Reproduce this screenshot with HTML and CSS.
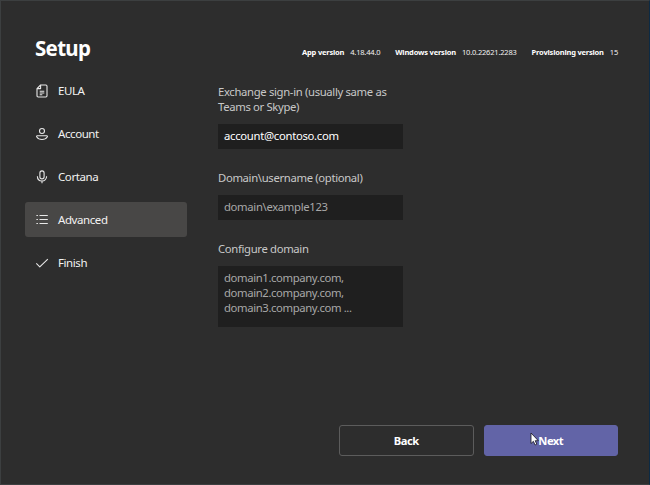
FILE: index.html
```html
<!DOCTYPE html>
<html lang="en">
<head>
<meta charset="utf-8">
<title>Setup</title>
<link rel="stylesheet" href="styles.css">
</head>
<body>
<div class="window">
  <header class="header">
    <h1 class="title">Setup</h1>
    <div class="versions">
      <div class="version"><b>App version</b><span>4.18.44.0</span></div>
      <div class="version"><b>Windows version</b><span>10.0.22621.2283</span></div>
      <div class="version"><b>Provisioning version</b><span>15</span></div>
    </div>
  </header>
  <div class="content">
    <nav class="nav">
      <a class="nav-item"><svg class="icon" viewBox="0 0 14 14"><path d="M5.600 1h5.200c.7 0 1.200.5 1.200 1.200v9.600c0 .7-.5 1.200-1.200 1.200H3.200c-.7 0-1.200-.5-1.200-1.200V4.600z"/><path d="M5.600 1v3.600H2M4.700 7.200h4.600M4.700 9h4.600M4.700 10.700h2.600"/></svg><span>EULA</span></a>
      <a class="nav-item"><svg class="icon" viewBox="0 0 14 14"><circle cx="7" cy="4" r="2.500"/><path d="M2.300 8.700h9.400c.8 0 .9.700.5 1.300-1 1.600-2.800 2.500-5.200 2.500S2.800 11.600 1.800 10c-.4-.6-.3-1.300.5-1.300z"/></svg><span>Account</span></a>
      <a class="nav-item"><svg class="icon" viewBox="0 0 14 14"><rect x="4.900" y=".9" width="4.200" height="8" rx="2.100"/><path d="M2.400 6.300c0 2.700 1.900 4.700 4.600 4.700s4.600-2 4.600-4.700M7 11v2.300"/></svg><span>Cortana</span></a>
      <a class="nav-item active"><svg class="icon" viewBox="0 0 14 14"><path d="M4.500 2.500h8.300M4.500 6.500h8.300M4.500 10.500h8.300M1.400 2.500h1.500M1.400 6.500h1.500M1.400 10.500h1.500"/></svg><span>Advanced</span></a>
      <a class="nav-item"><svg class="icon" viewBox="0 0 14 14"><path d="M1.300 7.300l3.500 3.500 8-7.600"/></svg><span>Finish</span></a>
    </nav>
    <main class="form">
      <div class="label label-wrap">Exchange sign-in (usually same as<br>Teams or Skype)</div>
      <div class="field filled">account@contoso.com</div>
      <div class="label">Domain\username (optional)</div>
      <div class="field">domain\example123</div>
      <div class="label">Configure domain</div>
      <div class="field area">domain1.company.com,<br>domain2.company.com,<br>domain3.company.com ...</div>
    </main>
  </div>
  <footer class="actions">
    <button class="btn">Back</button>
    <button class="btn primary">Next
      <svg class="cursor" viewBox="0 0 9 14"><path d="M1 1v10.500l2.400-2.200 1.700 3.700 1.700-.8-1.600-3.500h3.100z"/></svg>
    </button>
  </footer>
</div>
</body>
</html>
```
FILE: styles.css
```css
* { box-sizing: border-box; }
body {
  margin: 0;
  background: #2d2d2d;
  color: #f2f2f2;
  font-family: "Noto Sans", "Open Sans", sans-serif;
  font-size: 11.5px;
}
.window {
  height: 485px;
  display: flex;
  flex-direction: column;
  border: 1px solid #3c3f40;
  border-right-color: #0c2a44;
}
.header {
  height: 72px;
  padding: 34px 31px 0 34px;
  display: flex;
  justify-content: space-between;
}
.title {
  margin: 0;
  font-size: 20.5px;
  letter-spacing: -.7px;
  line-height: 26px;
  font-weight: 700;
  color: #fff;
}
.versions {
  display: flex;
  gap: 15px;
  padding-top: 10px;
  font-size: 7.5px;
  letter-spacing: -.19px;
  line-height: 14px;
  white-space: nowrap;
}
.version { display: flex; gap: 6px; }
.version b { color: #fff; }
.content { display: flex; height: 352px; }
.nav {
  width: 162px;
  margin-left: 24px;
  display: flex;
  flex-direction: column;
  gap: 8px;
  letter-spacing: -.42px;
}
.nav-item {
  height: 35px;
  padding-left: 10px;
  display: flex;
  align-items: center;
  gap: 9px;
  border-radius: 3px;
}
.nav-item.active { background: #484746; }
.icon {
  width: 14px;
  height: 14px;
  fill: none;
  stroke: #e8e8e8;
  stroke-width: 1.1;
  stroke-linejoin: round;
}
.form {
  width: 185px;
  margin-left: 31px;
  padding-top: 11px;
  font-size: 11.3px;
  letter-spacing: -.34px;
}
.label {
  height: 15px;
  margin-bottom: 10px;
  line-height: 15px;
  color: #c8c8c8;
  white-space: nowrap;
}
.label-wrap { height: 30px; }
.field {
  height: 25px;
  margin-bottom: 21px;
  padding: 0 6px;
  line-height: 24px;
  background: #1f1f1f;
  color: #a8a8a8;
  white-space: nowrap;
}
.field.filled { color: #fff; letter-spacing: -.3px; }
.field.area { height: 61px; padding-top: 4px; line-height: 15px; letter-spacing: -.38px; }
.actions {
  display: flex;
  justify-content: flex-end;
  gap: 10px;
  padding-right: 31px;
}
.btn {
  position: relative;
  width: 134.5px;
  height: 31px;
  padding: 0;
  border: 1px solid #5c5c5c;
  border-radius: 3px;
  background: transparent;
  color: #fff;
  font: 700 11.2px/29px "Noto Sans", "Open Sans", sans-serif;
  letter-spacing: -.5px;
}
.btn.primary { background: #6264a7; border-color: #6264a7; }
.cursor {
  position: absolute;
  left: 45px;
  top: 6px;
  width: 9px;
  height: 14px;
  fill: #fff;
  stroke: #151520;
  stroke-width: .8;
}
```
